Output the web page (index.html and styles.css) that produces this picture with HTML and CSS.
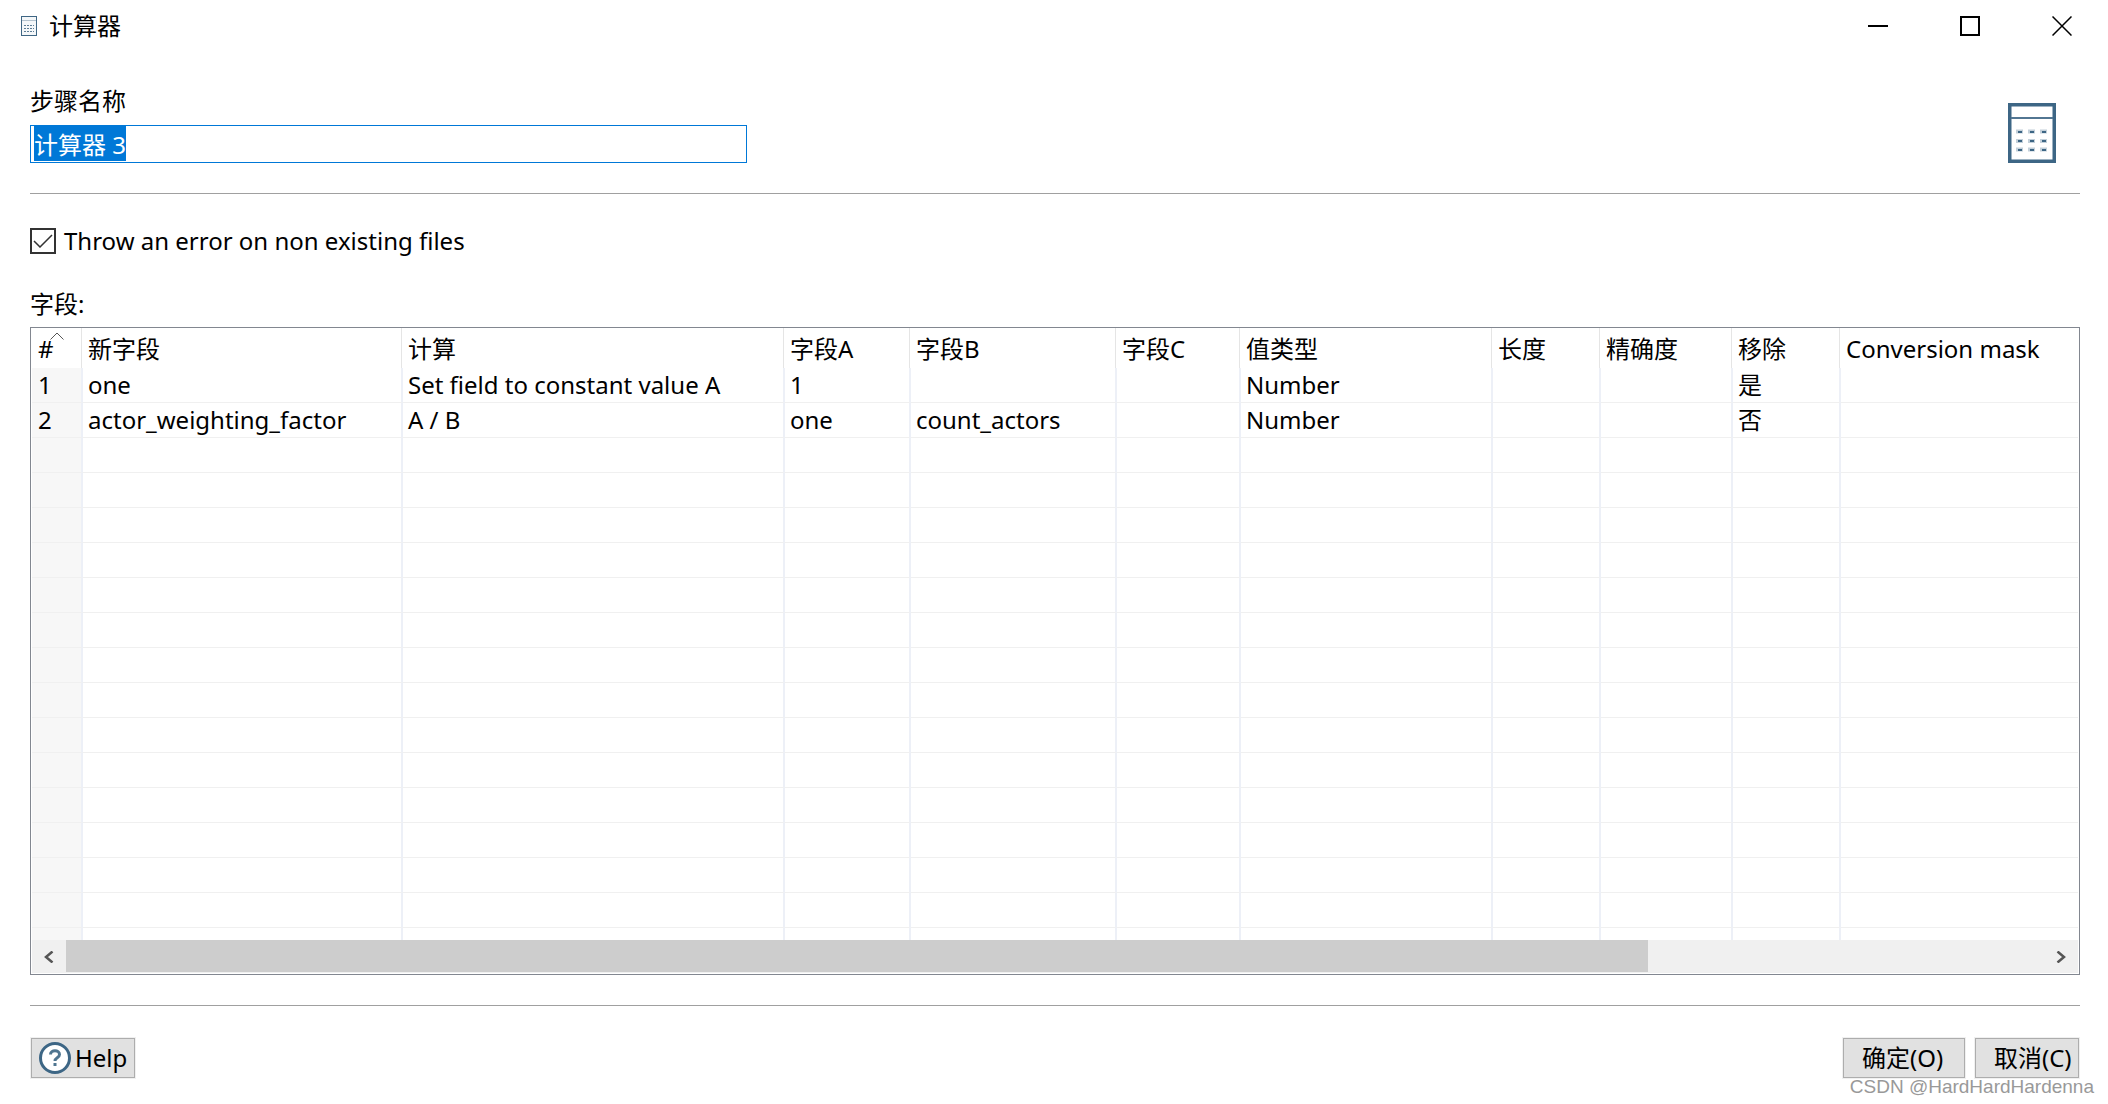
FILE: index.html
```html
<!DOCTYPE html>
<html lang="zh-CN">
<head>
<meta charset="utf-8">
<title>计算器</title>
<link rel="stylesheet" href="styles.css">
</head>
<body>
<header class="titlebar">
  <svg class="app-icon" width="16" height="20" viewBox="0 0 16 20" aria-hidden="true">
    <rect x=".5" y=".5" width="15" height="19" fill="#f4f7f9" stroke="#3f6684"/>
    <path d="M1 4.5h14" stroke="#b4c3cf"/>
    <path d="M3 9.5h2m1 0h2m1 0h2m1 0h1M3 12.5h2m1 0h2m1 0h2m1 0h1M3 15.5h2m1 0h2m1 0h2m1 0h1" stroke="#5d7d96"/>
  </svg>
  <h1 class="title">计算器</h1>
  <div class="window-controls">
    <button type="button" class="window-button" aria-label="最小化"><svg width="20" height="20"><path d="M0 10h20" stroke="#000" stroke-width="2"/></svg></button>
    <button type="button" class="window-button" aria-label="最大化"><svg width="20" height="20"><path d="M1 1h18v18H1z" fill="none" stroke="#000" stroke-width="2"/></svg></button>
    <button type="button" class="window-button" aria-label="关闭"><svg width="20" height="20"><path d="M.5 .5l19 19M19.500 .5l-19 19" stroke="#000" stroke-width="1.500"/></svg></button>
  </div>
</header>
<main class="dialog">
  <section class="step">
    <div class="step-field">
      <label for="step-name">步骤名称</label>
      <input class="step-input" id="step-name" type="text" value="计算器 3" autofocus>
    </div>
    <svg class="step-icon" width="48" height="60" viewBox="0 0 48 60" aria-hidden="true">
      <path d="M1.750 1.750h44.500v56.500H1.750z" fill="#fff" stroke="#3d6685" stroke-width="3.500"/>
      <path d="M3 15h42" stroke="#527692" stroke-width="2"/>
      <path d="M8 28.500h7m5 0h7m5 0h7M8 38h7m5 0h7m5 0h7M8 46.500h7m5 0h7m5 0h7" stroke="#c3d0da" stroke-width="4"/>
      <path d="M10 29h4m8 0h4m8 0h4M10 38h4m8 0h4m8 0h4M10 47h4m8 0h4m8 0h4" stroke="#3d6685" stroke-width="2"/>
    </svg>
  </section>
  <label class="check"><input class="check-box" type="checkbox" checked>Throw an error on non existing files</label>
  <p class="caption" id="fields-caption">字段:</p>
  <div class="grid">
    <div class="grid-view">
      <table class="fields" aria-labelledby="fields-caption">
        <colgroup>
          <col class="c-index"><col class="c-name"><col class="c-calc"><col class="c-a"><col class="c-b"><col class="c-c"><col class="c-type"><col class="c-short"><col class="c-precision"><col class="c-short"><col>
        </colgroup>
        <thead>
          <tr>
            <th class="sorted">#<svg class="sort-mark" width="14" height="8"><path d="M.5 7.500L7 1l6.500 6.500" fill="none" stroke="#555"/></svg></th>
            <th>新字段</th><th>计算</th><th>字段A</th><th>字段B</th><th>字段C</th><th>值类型</th><th>长度</th><th>精确度</th><th>移除</th><th>Conversion mask</th>
          </tr>
        </thead>
        <tbody id="rows">
          <tr><td>1</td><td>one</td><td>Set field to constant value A</td><td>1</td><td></td><td></td><td>Number</td><td></td><td></td><td>是</td><td></td></tr>
          <tr><td>2</td><td>actor_weighting_factor</td><td>A / B</td><td>one</td><td>count_actors</td><td></td><td>Number</td><td></td><td></td><td>否</td><td></td></tr>
        </tbody>
      </table>
    </div>
    <div class="scrollbar">
      <button type="button" class="scroll-button" aria-label="向左滚动"><svg width="10" height="12"><path d="M8.500 .5L2 6l6.500 5.500" fill="none" stroke="#555" stroke-width="2.500"/></svg></button>
      <div class="track"><div class="thumb"></div></div>
      <button type="button" class="scroll-button" aria-label="向右滚动"><svg width="10" height="12"><path d="M1.500 .5L8 6l-6.500 5.500" fill="none" stroke="#555" stroke-width="2.500"/></svg></button>
    </div>
  </div>
  <footer class="actions">
    <button type="button" class="button help">
      <svg width="32" height="32" viewBox="0 0 32 32" aria-hidden="true">
        <circle cx="16" cy="16" r="14.500" fill="#fff" stroke="#3d6685" stroke-width="3"/>
        <path d="M11.500 12.500c0-5 9-5 9 0 0 3.500-4.500 3-4.500 6.500M16 21v3" fill="none" stroke="#4f7590" stroke-width="3"/>
      </svg>Help</button>
    <button type="button" class="button ok">确定(O)</button>
    <button type="button" class="button cancel">取消(C)</button>
  </footer>
</main>
<div class="watermark">CSDN @HardHardHardenna</div>
<script src="dialog.js"></script>
</body>
</html>
```
FILE: styles.css
```css
* {
  box-sizing: border-box;
}

body {
  position: relative;
  display: flex;
  flex-direction: column;
  min-height: 100vh;
  margin: 0;
  background: #fff;
  color: #000;
  font: 24px/32px "Noto Sans", "Noto Sans CJK SC", sans-serif;
}

button,
input {
  margin: 0;
  font: inherit;
  color: inherit;
}

.titlebar {
  display: flex;
  align-items: center;
  height: 52px;
  padding-left: 21px;
}

.title {
  flex: 1;
  margin: 0 0 0 12px;
  font-size: 24px;
  font-weight: 400;
}

.window-controls {
  display: flex;
}

.window-button {
  display: flex;
  align-items: center;
  justify-content: center;
  width: 92px;
  height: 52px;
  padding: 0;
  border: 0;
  background: none;
}

.dialog {
  display: flex;
  flex: 1;
  flex-direction: column;
  padding: 33px 28px 26px 30px;
}

.step {
  display: flex;
  align-items: flex-end;
  justify-content: space-between;
  padding-bottom: 30px;
  border-bottom: 1px solid #a0a0a0;
}

.step-field {
  display: flex;
  flex: 0 0 calc(35% - 1px);
  flex-direction: column;
  gap: 8px;
}

.step-input {
  width: 100%;
  height: 38px;
  padding: 0 3px 2px;
  border: 1px solid #0078d7;
  outline: 0;
  line-height: 31px;
}

.step-input::selection {
  background: #0078d7;
  color: #fff;
}

.step-icon {
  margin-right: 24px;
}

.check {
  display: flex;
  align-items: center;
  align-self: flex-start;
  gap: 8px;
  margin-top: 31px;
}

.check-box {
  width: 26px;
  height: 26px;
  appearance: none;
  border: 2px solid #333;
  background: no-repeat center / 20px 14px url("data:image/svg+xml,%3Csvg xmlns='http://www.w3.org/2000/svg' viewBox='0 0 20 14'%3E%3Cpath d='M1 7l6 6L19 1' fill='none' stroke='%23333' stroke-width='1.500'/%3E%3C/svg%3E");
}

.caption {
  margin: 31px 0 7px;
}

.grid {
  display: flex;
  flex: 1;
  flex-direction: column;
  padding: 0 1px 1px;
  border: 1px solid #828790;
}

.grid-view {
  flex: 1 0 610px;
  height: 610px;
  overflow: hidden;
}

.fields {
  width: 100%;
  table-layout: fixed;
  border-spacing: 0;
}

.c-index { width: 51px; }
.c-name { width: 320px; }
.c-calc { width: 382px; }
.c-a { width: 126px; }
.c-b { width: 206px; }
.c-c { width: 124px; }
.c-type { width: 252px; }
.c-short { width: 108px; }
.c-precision { width: 132px; }

.fields th {
  height: 40px;
  padding: 2px 0 0 5px;
  background: linear-gradient(#e5e5e5, #e5e5e5) no-repeat right 1px top / 1px 100%;
  font-weight: 400;
  line-height: 38px;
  text-align: left;
  white-space: nowrap;
}

.fields td {
  height: 35px;
  padding: 0 0 0 5px;
  border-right: 2px solid #edf0f7;
  border-bottom: 1px solid #f0f0f0;
  line-height: 34px;
  white-space: nowrap;
}

.fields th:last-child {
  background: none;
}

.fields td:last-child {
  border-right: 0;
}

.fields td:first-child {
  padding-left: 6px;
  background: #f7f7f7;
}

.fields .sorted {
  position: relative;
  padding-left: 6px;
}

.sort-mark {
  position: absolute;
  top: 4px;
  left: 18px;
}

.scrollbar {
  display: flex;
  height: 33px;
  background: #f0f0f0;
}

.scroll-button {
  display: flex;
  align-items: center;
  justify-content: center;
  width: 34px;
  padding: 0;
  border: 0;
  background: none;
}

.track {
  flex: 1;
}

.thumb {
  width: 80%;
  height: 32px;
  background: #cdcdcd;
}

.actions {
  display: flex;
  gap: 10px;
  margin-top: 30px;
  padding: 32px 1px 0;
  border-top: 1px solid #a0a0a0;
}

.button {
  display: flex;
  align-items: center;
  height: 40px;
  padding: 0 0 0 18px;
  border: 1px solid #adadad;
  background: #e1e1e1;
  box-shadow: 0 0 0 1px #f0f0f0;
  white-space: nowrap;
}

.help {
  gap: 4px;
  width: 104px;
  margin-right: auto;
  padding-left: 7px;
}

.ok {
  width: 122px;
}

.cancel {
  width: 104px;
}

.watermark {
  position: absolute;
  right: 14px;
  bottom: 5px;
  color: #999;
  font: 19px/24px "Liberation Sans", sans-serif;
  text-shadow: -1px -1px 0 #fff;
}
```
FILE: dialog.js
```js
// Fill the rest of the grid with blank rows.
const rows = document.getElementById("rows");
for (let i = 0; i < 15; i++) {
  const row = rows.insertRow();
  for (let c = 0; c < 11; c++) row.insertCell();
}

// The step name is ready to be typed over.
const stepName = document.getElementById("step-name");
stepName.focus();
stepName.select();
```
